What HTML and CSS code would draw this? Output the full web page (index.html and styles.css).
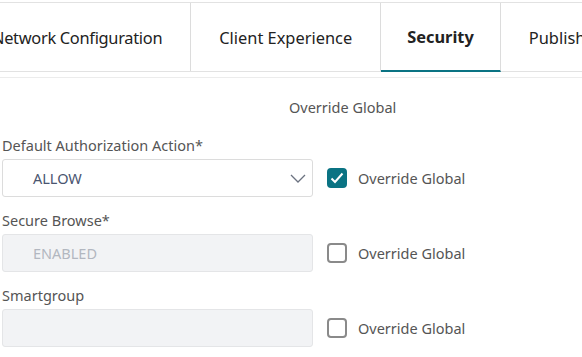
FILE: index.html
```html
<!DOCTYPE html>
<html lang="en">
<head>
    <meta charset="UTF-8">
    <meta name="viewport" content="width=device-width, initial-scale=1.0">
    <title>Security</title>
    <link rel="stylesheet" href="styles.css">
</head>
<body>

    <div class="tabs">
        <div class="tab first">Network Configuration</div>
        <div class="tab">Client Experience</div>
        <div class="tab active">Security</div>
        <div class="tab">Publishing</div>
    </div>
    <div class="divider"></div>

    <form class="form">
        <div class="form-head">
            <span></span>
            <span class="head-text">Override Global</span>
        </div>

        <div class="row">
            <div class="field">
                <label for="authAction">Default Authorization Action*</label>
                <div class="select">
                    <span>ALLOW</span>
                    <svg width="16" height="9" viewBox="0 0 16 9"><path d="M1 1 L8 8 L15 1" fill="none" stroke="#6b7280" stroke-width="1.3"/></svg>
                </div>
            </div>
            <label class="check">
                <span class="box checked">
                    <svg width="14" height="12" viewBox="0 0 14 12"><path d="M1.5 6.5 L5 10 L12.5 1.5" fill="none" stroke="#fff" stroke-width="2"/></svg>
                </span>
                Override Global
            </label>
        </div>

        <div class="row">
            <div class="field">
                <label for="secureBrowse">Secure Browse*</label>
                <div class="input disabled">ENABLED</div>
            </div>
            <label class="check">
                <span class="box"></span>
                Override Global
            </label>
        </div>

        <div class="row">
            <div class="field">
                <label for="smartgroup">Smartgroup</label>
                <div class="input disabled"></div>
            </div>
            <label class="check">
                <span class="box"></span>
                Override Global
            </label>
        </div>
    </form>

</body>
</html>
```

FILE: styles.css
```css
body {
    font-family: "Noto Sans", "Open Sans", sans-serif;
    background-color: #fff;
    color: #555;
    margin: 0;
    overflow: hidden;
}

.tabs {
    display: flex;
    margin-top: 2px;
    margin-left: -36px;
    border-top: 1px solid #e2e2e2;
    border-bottom: 1px solid #e2e2e2;
    height: 68px;
    white-space: nowrap;
}

.tab {
    display: flex;
    align-items: center;
    padding: 0 28px;
    font-size: 16.4px;
    color: #222;
    border-right: 1px solid #dcdcdc;
    box-sizing: border-box;
}

.tab.first {
    letter-spacing: -0.3px;
}

.tab.active {
    font-weight: bold;
    padding: 0 26px;
    border-bottom: 2px solid #0a7383;
    margin-bottom: -1px;
}

.divider {
    height: 5px;
    border-bottom: 1px solid #ececec;
}

.form {
    padding: 19px 0 0 2px;
}

.form-head {
    display: grid;
    grid-template-columns: 311px auto;
    column-gap: 14px;
    font-size: 14.5px;
    line-height: 20px;
    margin-bottom: 18px;
}

.head-text {
    margin-left: -38px;
}

.row {
    display: grid;
    grid-template-columns: 311px auto;
    column-gap: 14px;
    align-items: end;
    margin-bottom: 13px;
}

.field label {
    display: block;
    font-size: 14.5px;
    line-height: 20px;
    margin-bottom: 4px;
}

.select, .input {
    height: 38px;
    box-sizing: border-box;
    border: 1px solid #dcdcdc;
    border-radius: 3px;
    padding: 0 6px 0 30px;
    display: flex;
    align-items: center;
    font-size: 14.5px;
}

.select {
    justify-content: space-between;
    color: #4a5570;
}

.input.disabled {
    background-color: #f2f3f5;
    border-color: #e4e5e7;
    color: #b2b7c0;
}

.check {
    display: flex;
    align-items: center;
    gap: 11px;
    height: 38px;
    font-size: 14.5px;
}

.box {
    width: 20px;
    height: 20px;
    box-sizing: border-box;
    border: 2px solid #8a8a8a;
    border-radius: 4px;
    display: flex;
    align-items: center;
    justify-content: center;
}

.box.checked {
    background-color: #0a7383;
    border-color: #0a7383;
}
```
